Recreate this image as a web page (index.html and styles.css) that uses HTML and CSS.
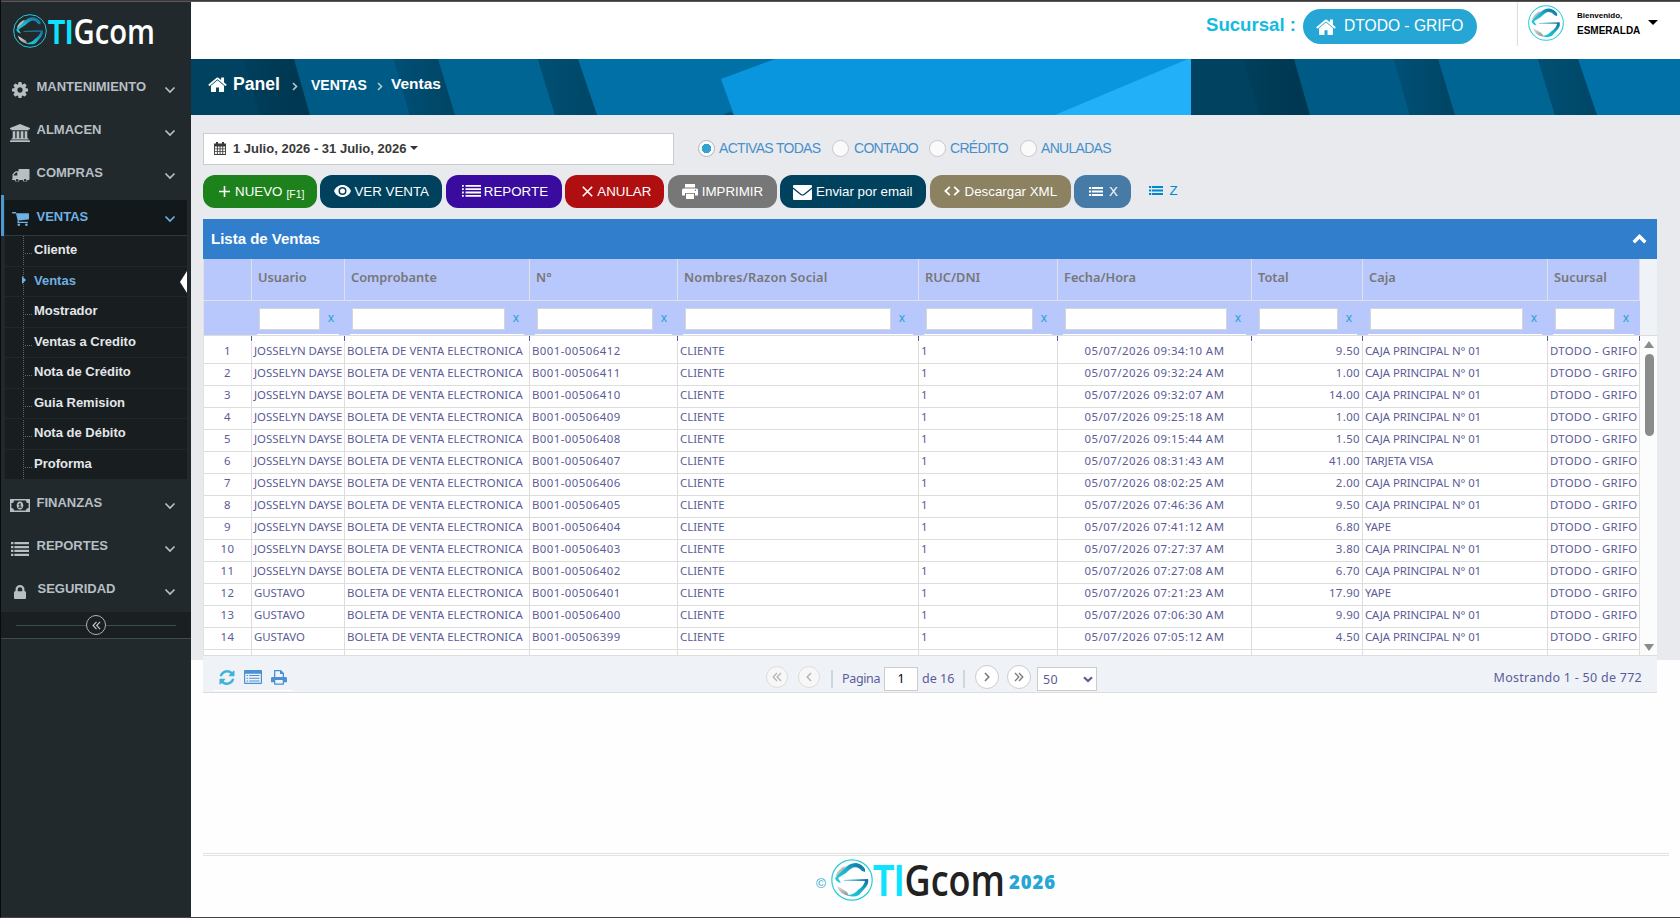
FILE: index.html
```html
<!DOCTYPE html>
<html lang="es">
<head>
    <meta charset="UTF-8">
    <title>TIGcom - Ventas</title>
    <link rel="stylesheet" href="styles.css">
</head>
<body>
    <svg class="sprite" xmlns="http://www.w3.org/2000/svg">
        <defs>
            <linearGradient id="teal" x1="0" y1="1" x2="1" y2="0">
                <stop offset="0" stop-color="#1fd0d8"/>
                <stop offset="0.5" stop-color="#18b4cc"/>
                <stop offset="1" stop-color="#1464a0"/>
            </linearGradient>
            <linearGradient id="steel" x1="0" y1="0" x2="1" y2="1">
                <stop offset="0" stop-color="#e2e2e4"/>
                <stop offset="1" stop-color="#8a8d92"/>
            </linearGradient>
        </defs>
        <symbol id="i-mark" viewBox="0 0 42 42">
            <circle cx="21" cy="21" r="20.2" fill="none" stroke="#26cdd8" stroke-width="1.2"/>
            <path d="M5 16Q8 9 15 7l-3 5-6 6z" fill="url(#steel)"/>
            <path d="M6 27q2 8 12 10l-2-4-8-5z" fill="url(#steel)"/>
            <path d="M4 19l9-9q5-6 12-6 6 1 9 6l0 3-3-1q-4-5-9-3.500-4 2-7 5.500l-8 5 3 5q-5-1-6-5z" fill="url(#teal)"/>
            <path d="M13 21l24-1q1 4-2 8l-7 8q-6 3-12 0 7 0 11-5 6-4 7-9l-21-.4z" fill="url(#teal)"/>
        </symbol>
        <symbol id="i-cog" viewBox="0 128 1536 1536"><path d="M1024 896q0-106-75-181t-181-75-181 75-75 181 75 181 181 75 181-75 75-181zm512-109v222q0 12-8 23t-20 13l-185 28q-19 54-39 91 35 50 107 138 10 12 10 25t-9 23q-27 37-99 108t-94 71q-12 0-26-9l-138-108q-44 23-91 38-16 136-29 186-7 28-36 28h-222q-14 0-24.500-8.500t-11.500-21.500l-28-184q-49-16-90-37l-141 107q-10 9-25 9-14 0-25-11-126-114-165-168-7-10-7-23 0-12 8-23 15-21 51-66.500t54-70.500q-27-50-41-99l-183-27q-13-2-21-12.500t-8-23.500v-222q0-12 8-23t19-13l186-28q14-46 39-92-40-57-107-138-10-12-10-24 0-10 9-23 26-36 98.500-107.500t94.500-71.500q13 0 26 10l138 107q44-23 91-38 16-136 29-186 7-28 36-28h222q14 0 24.500 8.500t11.500 21.500l28 184q49 16 90 37l142-107q9-9 24-9 13 0 25 10 129 119 165 170 7 8 7 22 0 12-8 23-15 21-51 66.500t-54 70.500q26 50 41 98l183 28q13 2 21 12.500t8 23.500z"/></symbol>
        <symbol id="i-bank" viewBox="0 0 20 18"><path d="M10 0l10 4v1.300h-1.300v1H1.300v-1H0V4zM2.700 7.300h2.600v7h1.300v-7h2.700v7h1.400v-7h2.700v7h1.300v-7h2.600v7h.8l.6.6v.6H1.300v-.6l.6-.6h.8zM.8 16.200h18.400l.8.600V18H0v-1.200z"/></symbol>
        <symbol id="i-truck" viewBox="0 0 18 14"><path d="M7 .6Q7 0 7.600 0h9.800q.6 0 .6.600V10q0 1-1 1h-.9a2.500 2.500 0 0 1-4.900 0H8.100a2.500 2.500 0 0 1-4.900 0H1.500Q.4 11 .4 10.400q.6-.4.6-1V6q0-.8.500-1.300l2-2Q4 2.200 4.700 2.200H7zM2.200 6.500H5.800V3.500H4.600L2.200 5.800z"/><circle cx="5.650" cy="11.400" r="1.300" class="hole"/><circle cx="13.650" cy="11.400" r="1.300" class="hole"/></symbol>
        <symbol id="i-cart" viewBox="0 0 17 14"><path d="M0 .7Q0 0 .6 0h2.800q.7 0 .8 1.200h12q.8 0 .8.700v4.800q0 .6-.6.700l-9.800 1.100.3 1.200h8.500q.6 0 .6.600t-.6.600H5.900q-.7 0-.7-.6l.6-1.300L4 1.400H.6Q0 1.400 0 .7z"/><circle cx="6.800" cy="12.700" r="1.300"/><circle cx="14.400" cy="12.700" r="1.300"/></symbol>
        <symbol id="i-money" viewBox="0 0 20 13"><path fill-rule="evenodd" d="M0 0h20v13H0zM4 1.400Q4 4 1.400 4v5Q4 9 4 11.600h12Q16 9 18.600 9V4Q16 4 16 1.400z"/><path fill-rule="evenodd" d="M10 2.500c2.200 0 3.300 2 3.300 4s-1.100 4-3.300 4-3.300-2-3.300-4 1.100-4 3.300-4zM9.600 4.200L8.200 5.400l.6.700.6-.4v2H8.300v1h3.400v-1h-1.100V4.200z"/></symbol>
        <symbol id="i-list" viewBox="0 0 18 14"><path d="M0 0h2.400v2.300H0zM3.400 0H18v2.300H3.400zM0 3.900h2.400v2.300H0zM3.400 3.900H18v2.300H3.400zM0 7.800h2.400v2.300H0zM3.400 7.800H18v2.300H3.400zM0 11.700h2.400V14H0zM3.400 11.700H18V14H3.400z"/></symbol>
        <symbol id="i-lock" viewBox="0 0 12 14"><path fill-rule="evenodd" d="M1.500 6.200V4.500a4.500 4.500 0 0 1 9 0v1.700h.5q1 0 1 1V13q0 1-1 1H1q-1 0-1-1V7.200q0-1 1-1zM3.700 6.200h4.600V4.500a2.300 2.300 0 0 0-4.600 0z"/></symbol>
        <symbol id="i-down" viewBox="0 0 12 8"><path d="M1.500 1.500L6 6l4.500-4.500" fill="none" stroke="currentColor" stroke-width="1.700"/></symbol>
        <symbol id="i-select" viewBox="0 0 10 7"><path d="M1 1.300l4 3.700 4-3.700" fill="none" stroke="currentColor" stroke-width="2.200"/></symbol>
        <symbol id="i-right" viewBox="0 0 6 9"><path d="M1 1l3.500 3.500L1 8" fill="none" stroke="currentColor" stroke-width="1.600"/></symbol>
        <symbol id="i-first" viewBox="0 0 10 10"><path d="M5 1L1.200 5 5 9M9 1L5.200 5 9 9" fill="none" stroke="currentColor" stroke-width="1.300"/></symbol>
        <symbol id="i-last" viewBox="0 0 10 10"><path d="M1 1l3.800 4L1 9M5 1l3.800 4L5 9" fill="none" stroke="currentColor" stroke-width="1.300"/></symbol>
        <symbol id="i-prev" viewBox="0 0 10 10"><path d="M7 1L3.200 5 7 9" fill="none" stroke="currentColor" stroke-width="1.500"/></symbol>
        <symbol id="i-next" viewBox="0 0 10 10"><path d="M3 1l3.800 4L3 9" fill="none" stroke="currentColor" stroke-width="1.500"/></symbol>
        <symbol id="i-home" viewBox="0 220 1664 1320"><path d="M1408 992v480q0 26-19 45t-45 19H960v-384H704v384H320q-26 0-45-19t-19-45V992q0-1 .5-3t.5-3l575-474 575 474q1 2 1 6zm223-69l-62 74q-8 9-21 11h-3q-13 0-21-7L832 424 140 1001q-12 8-24 7-13-2-21-11l-62-74q-8-10-7-23.500t11-21.500l719-599q32-26 76-26t76 26l244 204V288q0-14 9-23t23-9h192q14 0 23 9t9 23v408l219 182q10 8 11 21.500t-7 23.500z"/></symbol>
        <symbol id="i-calendar" viewBox="0 0 12 13"><path fill-rule="evenodd" d="M2 0h2v1.500h4V0h2v1.500h2V13H0V1.500h2zM.9 4.500v1.900h2V4.500zm2.900 0v1.900h1.800V4.500zm2.700 0v1.900h1.800V4.500zm2.700 0v1.900h1.900V4.500zM.9 7.200v2h2v-2zm2.900 0v2h1.800v-2zm2.700 0v2h1.800v-2zm2.700 0v2h1.900v-2zM.9 10v2.100h2V10zm2.900 0v2.100h1.800V10zm2.700 0v2.100h1.800V10zm2.700 0v2.100h1.900V10z"/></symbol>
        <symbol id="i-plus" viewBox="0 0 11 11"><path d="M4.700 0h1.600v4.700H11v1.600H6.300V11H4.700V6.300H0V4.700h4.700z"/></symbol>
        <symbol id="i-eye" viewBox="0 0 17 12"><path fill-rule="evenodd" d="M8.500 0C12.500 0 15.500 2.500 17 6c-1.500 3.500-4.500 6-8.500 6S1.500 9.500 0 6C1.500 2.500 4.500 0 8.500 0zm0 2a4 4 0 1 0 0 8 4 4 0 0 0 0-8z"/><circle cx="8.500" cy="6" r="2.500"/></symbol>
        <symbol id="i-bars" viewBox="0 0 19 12"><path d="M0 0h1.800v1.800H0zM3.500 0H19v1.800H3.500zM0 3.300h1.800v1.800H0zM3.500 3.300H19v1.800H3.500zM0 6.600h1.800v1.800H0zM3.500 6.600H19v1.800H3.500zM0 9.900h1.800v1.800H0zM3.500 9.900H19v1.800H3.500z"/></symbol>
        <symbol id="i-bars3" viewBox="0 0 14 9"><path d="M0 0h2.200v2H0zM3 0h11v2H3zM0 3.500h2.200v2H0zM3 3.500h11v2H3zM0 7h2.200v2H0zM3 7h11v2H3z"/></symbol>
        <symbol id="i-x" viewBox="0 0 11 11"><path d="M.8.8l9.400 9.400M10.200.8L.8 10.200" fill="none" stroke="currentColor" stroke-width="1.600"/></symbol>
        <symbol id="i-print" viewBox="0 0 16 15"><path fill-rule="evenodd" d="M3 0h10v3.500H3zM1.500 4.500h13Q16 4.500 16 6v5.500h-3V9H3v2.500H0V6q0-1.500 1.500-1.500zm11.300 1.300v1.300h1.300V5.800zM4 9.800h8V15H4z"/></symbol>
        <symbol id="i-print-o" viewBox="0 0 16 15"><path fill-rule="evenodd" d="M3 .5Q3 0 3.500 0h6.300L13 3v4h1.500Q16 7 16 8.300v3.900h-3V14q0 .7-.7.700H3.700Q3 14.700 3 14v-1.800H0V8.300Q0 7 1.500 7H3zM4.300 1.200V7h7.400V4H9V1.200zM4.300 10v3.500h7.400V10z"/></symbol>
        <symbol id="i-mail" viewBox="0 0 19 15"><path d="M1 0h17q1 0 1 1v1.300L10.700 9q-1.200.8-2.400 0L0 2.300V1q0-1 1-1zM0 4l7.600 6q1.900 1.200 3.800 0L19 4v10q0 1-1 1H1q-1 0-1-1z"/></symbol>
        <symbol id="i-code" viewBox="0 0 16 10"><path d="M5.800.8L1.400 5l4.400 4.200M10.200.8L14.600 5l-4.400 4.200" fill="none" stroke="currentColor" stroke-width="1.800"/></symbol>
        <symbol id="i-up" viewBox="0 0 15 10"><path d="M1.700 8.300l5.800-5.800 5.800 5.800" fill="none" stroke="currentColor" stroke-width="3.400"/></symbol>
        <symbol id="i-refresh" viewBox="0 128 1536 1536"><path d="M1511 1056q0 5-1 7-64 268-268 434.500T764 1664q-146 0-282.500-55T238 1452l-129 129q-19 19-45 19t-45-19-19-45v-448q0-26 19-45t45-19h448q26 0 45 19t19 45-19 45l-137 137q71 66 161 102t187 36q134 0 250-65t186-179q11-17 53-117 8-23 30-23h192q13 0 22.500 9.500t9.500 22.500zm25-800v448q0 26-19 45t-45 19h-448q-26 0-45-19t-19-45 19-45l138-138Q969 384 768 384q-134 0-250 65T332 628q-11 17-53 117-8 23-30 23H50q-13 0-22.500-9.500T18 736v-7q65-268 270-434.500T768 128q146 0 284 55.500T1297 340l130-129q19-19 45-19t45 19 19 45z"/></symbol>
        <symbol id="i-grid" viewBox="0 0 18 14"><path fill-rule="evenodd" d="M1 0h16q1 0 1 1v12q0 1-1 1H1q-1 0-1-1V1q0-1 1-1zm.2 3.800v9h15.600v-9zM2.500 4.900h1.600V6H2.500zM5.200 4.900h10.300V6H5.200zM2.500 7.700h1.600v1.100H2.500zM5.200 7.700h10.300v1.100H5.200zM2.500 10.500h1.600v1.100H2.500zM5.200 10.500h10.300v1.100H5.200z"/></symbol>
    </svg>

    <div class="window-edge"></div>
    <div class="app">
        <aside class="sidebar">
            <div class="brand">
                <svg class="brand-mark"><use href="#i-mark"/></svg>
                <svg class="brand-text" viewBox="0 0 107 33">
                    <text class="brand-ti" x="0" y="30" font-size="35" textLength="25" lengthAdjust="spacingAndGlyphs">TI</text>
                    <text class="brand-gcom" x="25.500" y="30" font-size="34" textLength="81.500" lengthAdjust="spacingAndGlyphs">Gcom</text>
                </svg>
            </div>
            <nav>
                <a class="menu"><svg class="mi cog"><use href="#i-cog"/></svg><span>MANTENIMIENTO</span><svg class="arrow"><use href="#i-down"/></svg></a>
                <a class="menu"><svg class="mi bank"><use href="#i-bank"/></svg><span>ALMACEN</span><svg class="arrow"><use href="#i-down"/></svg></a>
                <a class="menu"><svg class="mi truck"><use href="#i-truck"/></svg><span>COMPRAS</span><svg class="arrow"><use href="#i-down"/></svg></a>
                <a class="menu open"><svg class="mi cart"><use href="#i-cart"/></svg><span>VENTAS</span><svg class="arrow"><use href="#i-down"/></svg></a>
                <div class="submenu">
                    <a>Cliente</a>
                    <a class="active">Ventas</a>
                    <a>Mostrador</a>
                    <a>Ventas a Credito</a>
                    <a>Nota de Crédito</a>
                    <a>Guia Remision</a>
                    <a>Nota de Débito</a>
                    <a>Proforma</a>
                </div>
                <a class="menu"><svg class="mi money"><use href="#i-money"/></svg><span>FINANZAS</span><svg class="arrow"><use href="#i-down"/></svg></a>
                <a class="menu"><svg class="mi list"><use href="#i-list"/></svg><span>REPORTES</span><svg class="arrow"><use href="#i-down"/></svg></a>
                <a class="menu"><svg class="mi lock"><use href="#i-lock"/></svg><span>SEGURIDAD</span><svg class="arrow"><use href="#i-down"/></svg></a>
            </nav>
            <div class="collapse"><span class="line"></span><span class="circle"><svg><use href="#i-first"/></svg></span><span class="line"></span></div>
        </aside>

        <main class="main">
            <header class="navbar">
                <span class="branch-label">Sucursal :</span>
                <span class="branch"><svg><use href="#i-home"/></svg>DTODO - GRIFO</span>
                <div class="user">
                    <svg class="avatar"><use href="#i-mark"/></svg>
                    <div class="user-info"><small>Bienvenido,</small><b>ESMERALDA</b></div>
                    <i class="caret"></i>
                </div>
            </header>

            <div class="breadcrumb">
                <svg class="banner" preserveAspectRatio="none">
                    <defs>
                        <linearGradient id="shade1"><stop offset="0" stop-color="#003f5b"/><stop offset="1" stop-color="#003650"/></linearGradient>
                        <linearGradient id="shade2"><stop offset="0" stop-color="#005077"/><stop offset="1" stop-color="#004463"/></linearGradient>
                        <linearGradient id="shade3"><stop offset="0" stop-color="#005075"/><stop offset="1" stop-color="#004666"/></linearGradient>
                        <pattern id="tile" width="1000" height="56" patternUnits="userSpaceOnUse">
                            <path d="M0 0h1000v56H0z" fill="#00425f"/>
                            <path d="M52 0h51l16 56H69z" fill="url(#shade1)"/>
                            <path d="M103 0h100l16 56H119z" fill="#005a86"/>
                            <path d="M203 0h44l17 56h-45z" fill="url(#shade2)"/>
                            <path d="M247 0h100l17 56H264z" fill="#006593"/>
                            <path d="M347 0h40l19 56h-42z" fill="url(#shade3)"/>
                            <path d="M387 0h613v56H406z" fill="#0070a7"/>
                            <path d="M532 56l8-4 3 4z" fill="#005580"/>
                            <path d="M584 0h416v56H543l-13-36z" fill="#0996df"/>
                            <path d="M997 0h3v56H864z" fill="#22b0f8"/>
                        </pattern>
                    </defs>
                    <rect width="1489" height="56" fill="url(#tile)"/>
                </svg>
                <svg class="home"><use href="#i-home"/></svg>
                <span class="crumb-panel">Panel</span>
                <svg class="sep"><use href="#i-right"/></svg>
                <span class="crumb-module">VENTAS</span>
                <svg class="sep"><use href="#i-right"/></svg>
                <span class="crumb-page">Ventas</span>
            </div>

            <section class="content">
                <div class="filters">
                    <div class="date-range"><svg><use href="#i-calendar"/></svg>1 Julio, 2026 - 31 Julio, 2026<i class="caret"></i></div>
                    <div class="radios">
                        <label class="r1"><i class="radio on"></i>ACTIVAS TODAS</label>
                        <label class="r2"><i class="radio"></i>CONTADO</label>
                        <label class="r3"><i class="radio"></i>CRÉDITO</label>
                        <label class="r4"><i class="radio"></i>ANULADAS</label>
                    </div>
                </div>

                <div class="actions">
                    <a class="btn new"><svg><use href="#i-plus"/></svg>NUEVO<sub>[F1]</sub></a>
                    <a class="btn view"><svg><use href="#i-eye"/></svg>VER VENTA</a>
                    <a class="btn report"><svg><use href="#i-bars"/></svg>REPORTE</a>
                    <a class="btn cancel"><svg><use href="#i-x"/></svg>ANULAR</a>
                    <a class="btn print"><svg><use href="#i-print"/></svg>IMPRIMIR</a>
                    <a class="btn email"><svg><use href="#i-mail"/></svg>Enviar por email</a>
                    <a class="btn xml"><svg><use href="#i-code"/></svg>Descargar XML</a>
                    <a class="btn x"><svg><use href="#i-bars3"/></svg>X</a>
                    <a class="btn z"><svg><use href="#i-bars3"/></svg>Z</a>
                </div>

                <div class="panel">
                    <div class="panel-title">Lista de Ventas<svg><use href="#i-up"/></svg></div>
                    <div class="grid-head">
                        <div class="row head" id="head"></div>
                        <div class="row search" id="search"></div>
                    </div>
                    <div class="grid-body">
                        <div class="rows" id="rows"></div>
                        <div class="scrollbar"><i class="up"></i><i class="thumb"></i><i class="down"></i></div>
                    </div>
                    <div class="pager">
                        <div class="tools">
                            <svg class="t-refresh"><use href="#i-refresh"/></svg>
                            <svg class="t-grid"><use href="#i-grid"/></svg>
                            <svg class="t-print"><use href="#i-print-o"/></svg>
                        </div>
                        <div class="pages">
                            <span class="pg off"><svg><use href="#i-first"/></svg></span>
                            <span class="pg off"><svg><use href="#i-prev"/></svg></span>
                            <span class="bar"></span>
                            <span class="word">Pagina</span>
                            <span class="page-input">1</span>
                            <span class="of">de 16</span>
                            <span class="bar"></span>
                            <span class="pg"><svg><use href="#i-next"/></svg></span>
                            <span class="pg"><svg><use href="#i-last"/></svg></span>
                            <span class="size">50<svg><use href="#i-select"/></svg></span>
                        </div>
                        <div class="info">Mostrando 1 - 50 de 772</div>
                    </div>
                </div>
            </section>

            <footer class="footer">
                <div class="footer-inner">
                    <span class="copy">©</span>
                    <svg class="footer-mark"><use href="#i-mark"/></svg>
                    <svg class="footer-text" viewBox="0 0 134 42">
                        <text class="brand-ti" x="0" y="37" font-size="44" textLength="31" lengthAdjust="spacingAndGlyphs">TI</text>
                        <text class="brand-gcom" x="31.500" y="37" font-size="43" textLength="100.500" lengthAdjust="spacingAndGlyphs">Gcom</text>
                    </svg>
                    <span class="year">2026</span>
                </div>
            </footer>
        </main>
    </div>

    <script>
        const columns = ['', 'Usuario', 'Comprobante', 'N°', 'Nombres/Razon Social', 'RUC/DNI', 'Fecha/Hora', 'Total', 'Caja', 'Sucursal'];
        const caja = 'CAJA PRINCIPAL N° 01';
        const sales = [
            ['JOSSELYN DAYSE', '09:34:10', '9.50', caja],
            ['JOSSELYN DAYSE', '09:32:24', '1.00', caja],
            ['JOSSELYN DAYSE', '09:32:07', '14.00', caja],
            ['JOSSELYN DAYSE', '09:25:18', '1.00', caja],
            ['JOSSELYN DAYSE', '09:15:44', '1.50', caja],
            ['JOSSELYN DAYSE', '08:31:43', '41.00', 'TARJETA VISA'],
            ['JOSSELYN DAYSE', '08:02:25', '2.00', caja],
            ['JOSSELYN DAYSE', '07:46:36', '9.50', caja],
            ['JOSSELYN DAYSE', '07:41:12', '6.80', 'YAPE'],
            ['JOSSELYN DAYSE', '07:27:37', '3.80', caja],
            ['JOSSELYN DAYSE', '07:27:08', '6.70', caja],
            ['GUSTAVO', '07:21:23', '17.90', 'YAPE'],
            ['GUSTAVO', '07:06:30', '9.90', caja],
            ['GUSTAVO', '07:05:12', '4.50', caja]
        ];

        function cells(values) {
            return values.map((v, i) => `<div class="c${i}">${v}</div>`).join('');
        }

        document.getElementById('head').innerHTML = cells(columns);
        document.getElementById('search').innerHTML = cells(columns.map((c, i) => i ? '<input type="text"><a>x</a>' : ''));

        let html = '<div class="row first">' + cells(columns.map(() => '')) + '</div>';
        sales.forEach((s, i) => {
            html += '<div class="row">' + cells([
                i + 1, s[0], 'BOLETA DE VENTA ELECTRONICA', 'B001-00' + (506412 - i), 'CLIENTE', '1',
                '05/07/2026 ' + s[1] + ' AM', s[2], s[3], 'DTODO - GRIFO'
            ]) + '</div>';
        });
        html += '<div class="row">' + cells(columns.map(() => '')) + '</div>';
        document.getElementById('rows').innerHTML = html;
    </script>
</body>
</html>
```

FILE: styles.css
```css
* {
    box-sizing: border-box;
}
body {
    margin: 0;
    height: 918px;
    overflow: hidden;
    background: #fefefe;
    border-left: 1px solid #0a0a0a;
    border-bottom: 1px solid #444;
    font-family: "Liberation Sans", Arial, sans-serif;
    font-size: 13px;
    color: #393939;
}
svg {
    display: block;
    flex: none;
    fill: currentColor;
}
.sprite {
    position: absolute;
    width: 0;
    height: 0;
}
.window-edge {
    height: 2px;
    background: #3b3a3b;
    border-bottom: 1px solid #5a5859;
}
.app {
    display: flex;
    height: 915px;
}

/* sidebar */
.sidebar {
    width: 190px;
    flex: none;
    background: #22292c;
    color: #c0c8cd;
}
.brand {
    height: 64px;
    display: flex;
    padding: 12px 0 0 12px;
}
.brand-mark {
    width: 34px;
    height: 34px;
}
.brand-text {
    width: 107px;
    height: 33px;
    margin-left: 1px;
    overflow: visible;
}
.brand-ti {
    font-family: "Liberation Sans", sans-serif;
    font-weight: bold;
    fill: #0fe2ff;
}
.brand-gcom {
    font-family: "Open Sans", sans-serif;
    font-weight: 600;
    fill: #fff;
}
.menu {
    display: flex;
    align-items: center;
    height: 43px;
    font-weight: bold;
    color: #b7bfc4;
    padding-right: 15px;
}
.menu span {
    flex: 1;
    margin-left: 6.500px;
    padding-bottom: 2px;
}
.mi {
    position: relative;
    top: 2px;
    margin-left: 9px;
    width: 20px;
    height: 18px;
}
.mi.cog { height: 16px; }
.mi.truck { height: 14px; width: 19px; margin-left: 10px; }
.mi.cart { height: 14px; width: 17px; margin-left: 8px; margin-right: 1px; }
.mi.money { height: 13px; }
.mi.list { height: 14px; width: 18px; margin-left: 10px; margin-right: 1px; }
.mi.lock { height: 14px; width: 12px; margin-left: 13px; margin-right: 5px; }
.hole {
    fill: #22292c;
}
.arrow {
    position: relative;
    top: 2px;
    width: 12px;
    height: 8px;
}
.menu.open {
    height: 41px;
    border-left: 3px solid #4a9bd4;
    color: #6fb0e2;
    background: linear-gradient(#13181b, #13181b) 1px 5px / 182px 35px no-repeat;
}
.menu.open .mi,
.menu.open .arrow {
    top: 3px;
}
.menu.open span {
    padding: 1px 0 0;
}
.submenu {
    position: relative;
    margin: -1px 4px 3px 4px;
    height: 244px;
    border-top: 1px solid #2e3a3e;
    background: #181d20;
    display: flex;
    flex-direction: column;
}
.submenu::before {
    content: "";
    position: absolute;
    left: 18px;
    top: 0;
    bottom: 0;
    border-left: 1px dotted #5c666b;
}
.submenu a {
    position: relative;
    flex: 1;
    padding-left: 29px;
    line-height: 27px;
    font-weight: bold;
    color: #e4e7e9;
    border-bottom: 1px solid #21282b;
}
.submenu a:last-child {
    border-bottom: 0;
}
.submenu a::before {
    content: "";
    position: absolute;
    left: 20px;
    top: 17px;
    width: 7px;
    border-top: 1px dotted #5c666b;
}
.submenu a.active {
    color: #6fb0e2;
}
.submenu a.active::before {
    left: 17px;
    top: 9px;
    width: 0;
    border: 4px solid transparent;
    border-left-color: #6fb0e2;
    border-right: 0;
}
.submenu a.active::after {
    content: "";
    position: absolute;
    right: 0;
    top: 4px;
    border: 11px solid transparent;
    border-right: 7px solid #fff;
    border-left: 0;
}
.collapse {
    display: flex;
    align-items: center;
    height: 27px;
    margin-top: 1px;
    padding: 0 15px;
    background: #1a1f22;
    border-bottom: 1px solid #3d4a52;
}
.collapse .line {
    flex: 1;
    height: 1px;
    background: #3c4c4f;
}
.circle {
    width: 20px;
    height: 20px;
    border: 1px solid #aeb4b7;
    border-radius: 50%;
    display: flex;
    align-items: center;
    justify-content: center;
}
.circle svg {
    width: 9px;
    height: 9px;
}

/* top bar */
.main {
    flex: 1;
    display: flex;
    flex-direction: column;
}
.navbar {
    display: flex;
    height: 57px;
    background: #fff;
    justify-content: flex-end;
}
.branch-label {
    width: 97px;
    margin-top: 12px;
    font-size: 18.600px;
    font-weight: bold;
    color: #13bbdf;
}
.branch {
    display: flex;
    align-items: center;
    width: 174px;
    height: 35px;
    margin-top: 7px;
    padding: 0 0 2px 13px;
    border-radius: 18px;
    background: #25a6d5;
    color: #fff;
    font-size: 15.600px;
    white-space: nowrap;
}
.branch svg {
    width: 20px;
    height: 16px;
    margin: 3px 8px 0 0;
}
.user {
    display: flex;
    width: 163px;
    height: 44px;
    margin-left: 40px;
    border-left: 1px solid #ddd;
    color: #000;
}
.avatar {
    width: 36px;
    height: 36px;
    margin: 3px 13px 0 10px;
}
.user-info {
    display: flex;
    flex-direction: column;
    width: 71px;
    padding-top: 9px;
    font-size: 10px;
    white-space: nowrap;
}
.user-info small {
    font-size: 8px;
    font-weight: bold;
    line-height: 9px;
    margin-bottom: 5px;
}
.user-info b {
    line-height: 11px;
}
.user .caret {
    margin-top: 18px;
    border: 5px solid transparent;
    border-top-color: #000;
    border-bottom: 0;
    height: 5px;
}

.breadcrumb {
    position: relative;
    display: flex;
    align-items: center;
    height: 56px;
    padding: 0 0 6px 17px;
    color: #fff;
    font-weight: bold;
}
.banner {
    position: absolute;
    left: 0;
    top: 0;
    width: 100%;
    height: 100%;
}
.breadcrumb span,
.home,
.sep {
    position: relative;
}
.home {
    width: 19px;
    height: 15px;
}
.crumb-panel {
    font-size: 17.600px;
    margin-left: 6px;
    width: 58px;
}
.sep {
    width: 6px;
    height: 9px;
    margin-top: 5px;
    margin-left: 1px;
    color: #b9c9d2;
}
.crumb-module {
    font-size: 14px;
    width: 65px;
    margin-left: 13px;
    margin-top: 2px;
}
.crumb-page {
    font-size: 15.500px;
    margin-left: 8px;
}

/* filters and actions */
.content {
    height: 545px;
    background: #e9eaee;
    padding: 18px 0 0 12px;
}
.filters {
    display: flex;
    height: 32px;
}
.date-range {
    display: flex;
    align-items: center;
    width: 471px;
    padding: 0 0 2px 10px;
    border: 1px solid #ccc;
    background: #fff;
    font-weight: bold;
}
.date-range svg {
    width: 12px;
    height: 13px;
    margin-right: 7px;
}
.date-range .caret {
    margin-left: 4px;
    border: 4px solid transparent;
    border-top-color: #333;
    border-bottom: 0;
}
.radios {
    display: flex;
    padding-left: 24px;
    color: #478fca;
    font-size: 14px;
}
.radios label {
    display: flex;
    align-items: center;
    height: 30px;
    white-space: nowrap;
    letter-spacing: -0.700px;
}
.r1 { width: 134px; }
.r2 { width: 97px; }
.r3 { width: 91px; }
.radio {
    width: 17px;
    height: 17px;
    margin-right: 4px;
    border: 1px solid #c8c8c8;
    border-radius: 50%;
    background: #fafafa;
}
.r2 .radio {
    margin-right: 5px;
}
.radio.on {
    border-color: #adb8c0;
    background: radial-gradient(circle, #32a3ce 0 4.500px, #fafafa 5px);
}
.actions {
    display: flex;
    gap: 3.430px;
    margin-top: 10px;
}
.btn {
    display: flex;
    align-items: center;
    height: 33px;
    padding-bottom: 1px;
    border-radius: 12px;
    color: #fff;
    font-size: 13.330px;
    white-space: nowrap;
}
.btn sub {
    font-size: 10.400px;
    line-height: 1;
    vertical-align: baseline;
    margin: 8px 0 0 4px;
}
.new { width: 114px; background: #1d821c; padding-left: 16px; }
.new svg { width: 11px; height: 11px; margin-right: 5px; }
.view { width: 122px; background: #00415d; padding-left: 14px; }
.view svg { width: 17px; height: 12px; margin-right: 3px; }
.report { width: 116px; background: #390c9f; padding-left: 16px; }
.report svg { width: 19px; height: 12px; margin-right: 3px; }
.cancel { width: 99px; background: #af0f10; padding-left: 17px; }
.cancel svg { width: 11px; height: 11px; margin-right: 4px; }
.print { width: 109px; background: #777; padding-left: 14px; }
.print svg { width: 16px; height: 15px; margin-right: 4px; }
.email { width: 146px; background: #00415d; padding-left: 13px; }
.email svg { width: 19px; height: 15px; margin: 2px 4px 0 0; }
.xml { width: 141px; background: #8c8161; padding-left: 14px; }
.xml svg { width: 16px; height: 10px; margin-right: 5px; }
.x { width: 57px; background: #457ba6; padding-left: 15px; }
.x svg, .z svg { width: 14px; height: 9px; margin-right: 6px; }
.z { color: #0088cc; margin-left: 15px; padding-bottom: 3px; }

/* sales grid */
.panel {
    width: 1454px;
    margin-top: 11px;
    font-family: "Noto Sans", "Open Sans", sans-serif;
    color: #5b5b98;
}
.panel-title {
    display: flex;
    align-items: center;
    justify-content: space-between;
    height: 40px;
    padding: 0 10px 1px 8px;
    background: #307ecc;
    color: #fff;
    font-family: "Liberation Sans", Arial, sans-serif;
    font-size: 15px;
    font-weight: bold;
}
.panel-title svg {
    width: 15px;
    height: 10px;
}
.grid-head {
    height: 77px;
    background: #eff3f8;
    border-bottom: 1px solid #ddd;
    border-left: 1px solid #e1e1e1;
}
.row {
    display: grid;
    grid-template-columns: 48px 93px 185px 148px 241px 139px 194px 111px 185px 92px;
    width: 1436px;
}
.head {
    height: 42px;
    background: #b8c8fd;
    color: #777;
    font-size: 12.800px;
    font-weight: 600;
    line-height: 37px;
}
.head > div {
    padding-left: 6px;
    border-right: 1px solid #e1e1e1;
    border-bottom: 1px solid #e1e1e1;
}
.head .c4 {
    letter-spacing: 0.180px;
}
.search {
    height: 34px;
    background: #b8c8fd;
}
.search > div {
    display: flex;
    justify-content: space-between;
    padding: 7px 11px 0 7px;
    background: linear-gradient(#fff, #fff) 5px 33px / calc(100% - 11px) 1px no-repeat;
}
.search > .c4 {
    padding-right: 14px;
}
.search > .c0 {
    background: none;
}
.search input {
    width: calc(100% - 14px);
    height: 22px;
    border: 1px solid #d5d5d5;
    background: #fff;
    padding: 0;
}
.search a {
    font-size: 12px;
    line-height: 20px;
    color: #25a2d2;
}
.grid-body {
    display: flex;
    height: 320px;
    overflow: hidden;
    background: #fff;
    border-left: 1px solid #e1e1e1;
    border-bottom: 1px solid #ddd;
}
.rows .row {
    height: 22px;
    font-size: 11.400px;
    line-height: 17px;
}
.rows .row.first {
    height: 6px;
}
.rows .row > div {
    overflow: hidden;
    white-space: nowrap;
    padding: 0 2px;
    border-right: 1px solid #ddd;
    border-bottom: 1px solid #ddd;
}
.rows .first > div {
    border-bottom: 0;
    border-right-color: #5b5b98;
    height: 5px;
}
.rows .c0 { text-align: center; letter-spacing: 0.500px; }
.rows .c2 { letter-spacing: 0.040px; }
.rows .c3 { letter-spacing: 0.450px; }
.rows .c6 { text-align: center; letter-spacing: 0.480px; }
.rows .c7 { text-align: right; letter-spacing: 0.400px; }
.rows .c8 { letter-spacing: -0.100px; }
.rows .c9 { letter-spacing: 0.280px; }
.scrollbar {
    width: 17px;
    background: #fcfcfc;
    display: flex;
    flex-direction: column;
    align-items: center;
    padding: 5px 0 4px 1px;
}
.scrollbar .up {
    border: 5px solid transparent;
    border-bottom: 7px solid #8b8b8b;
    border-top: 0;
}
.scrollbar .thumb {
    width: 9px;
    height: 82px;
    margin-top: 6px;
    border-radius: 5px;
    background: #8b8b8b;
}
.scrollbar .down {
    margin-top: auto;
    border: 5px solid transparent;
    border-top: 7px solid #8b8b8b;
    border-bottom: 0;
}
.pager {
    display: flex;
    height: 37px;
    background: #eff3f8;
    border-bottom: 1px solid #ddd;
    font-size: 12.500px;
}
.tools {
    display: flex;
    align-items: center;
    width: 79px;
    height: 35px;
    margin-left: 11px;
    padding: 8px 0 0 5px;
    border-bottom: 1px solid #fff;
    color: #4a90d3;
}
.t-refresh { width: 16px; height: 15px; color: #3fb2d8; }
.t-grid { width: 18px; height: 14px; margin-left: 9px; }
.t-print { width: 16px; height: 15px; margin-left: 9px; }
.pages {
    display: flex;
    margin-left: 473px;
}
.pg {
    display: flex;
    align-items: center;
    justify-content: center;
    width: 24px;
    height: 24px;
    margin-top: 9px;
    margin-right: 8px;
    border: 1px solid #ccc;
    border-radius: 50%;
    background: #fff;
    color: #777;
}
.pg svg {
    width: 10px;
    height: 10px;
}
.pg.off {
    width: 22px;
    height: 22px;
    margin: 10px 10px 0 0;
    background: #f7f7f7;
    border-color: #ddd;
    color: #b5b5b5;
}
.bar {
    width: 2px;
    height: 18px;
    margin: 14px 9px 0 1px;
    background: #ccd7e0;
}
.word {
    width: 42px;
    margin-top: 14px;
    line-height: 18px;
    letter-spacing: -0.350px;
}
.page-input {
    width: 34px;
    height: 24px;
    margin-top: 11px;
    border: 1px solid #ccc;
    background: #fff;
    color: #000;
    text-align: center;
    line-height: 22px;
}
.of {
    width: 40px;
    margin: 14px 0 0 4px;
    line-height: 18px;
}
.of + .bar {
    margin-right: 10px;
}
.pg + .size {
    margin-left: -2px;
}
.size {
    display: flex;
    align-items: center;
    justify-content: space-between;
    width: 60px;
    height: 24px;
    margin-top: 11px;
    padding: 0 3px 0 5px;
    border: 1px solid #ccc;
    background: #fff;
    letter-spacing: 0.400px;
}
.size svg {
    width: 10px;
    height: 7px;
}
.info {
    margin-left: auto;
    margin-right: 15px;
    line-height: 44px;
    letter-spacing: 0.270px;
}

/* footer */
.footer {
    margin-top: auto;
    height: 64px;
    margin-left: 12px;
    margin-right: 11px;
    border-top: 3px double #e3e3e3;
}
.footer-inner {
    display: flex;
    padding: 3px 0 0 613px;
    color: #25a6d5;
}
.copy {
    width: 15px;
    margin-top: 17px;
    font-size: 13.500px;
}
.footer-mark {
    width: 42px;
    height: 42px;
}
.footer-text {
    width: 134px;
    height: 42px;
    overflow: visible;
}
.footer-text .brand-gcom {
    fill: #222;
}
.year {
    margin: 11px 0 0 2px;
    font-family: "Open Sans", sans-serif;
    font-size: 18.500px;
    font-weight: 800;
    line-height: 24px;
    letter-spacing: 0.900px;
}
```
